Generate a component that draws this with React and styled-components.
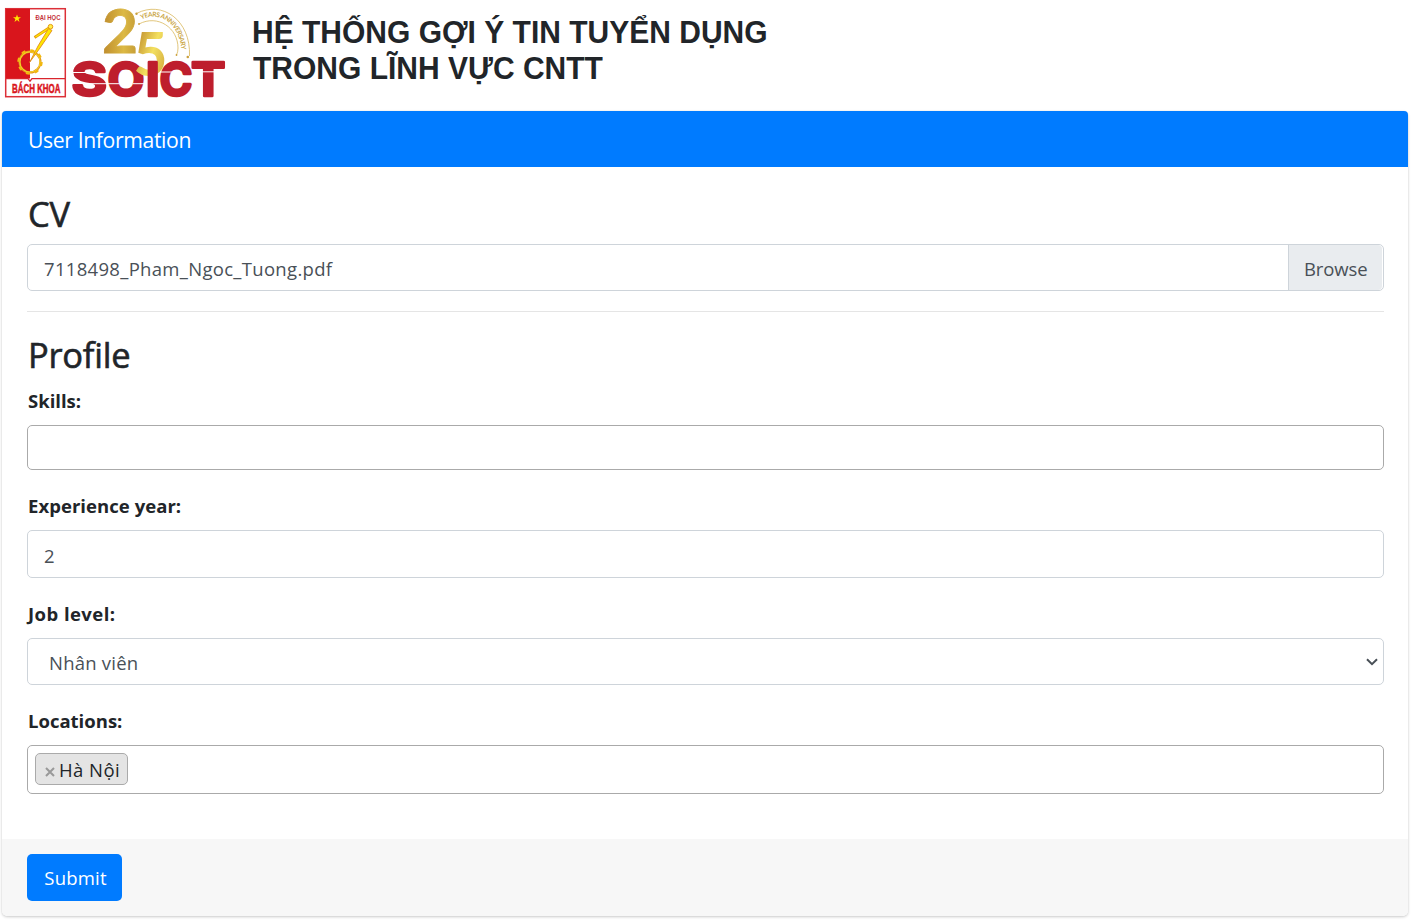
import React from 'react';
import styled, { createGlobalStyle } from 'styled-components';

const GlobalStyle = createGlobalStyle`
  *, *::before, *::after { box-sizing: border-box; }
  body {
    margin: 0;
    background: #fff;
    color: #212529;
    font-family: "Segoe UI", "Open Sans", "Noto Sans", sans-serif;
    font-size: 18.5px;
    line-height: 28px;
  }
`;

const Page = styled.div`
  width: 1412px;
  height: 922px;
  padding: 0 4px 0 2px;
  overflow: hidden;
`;

const Header = styled.header`
  display: flex;
  height: 111px;
`;

const Logo = styled.svg`
  display: block;
  flex: none;
  width: 250px;
  height: 108px;
`;

const SiteTitle = styled.h1`
  margin: 0;
  padding-top: 15px;
  font-family: "Liberation Sans", Arial, sans-serif;
  font-size: 30px;
  font-weight: 700;
  line-height: 36px;
  white-space: nowrap;
`;

const TitleLine = styled.span`
  display: block;
  padding-left: ${(p) => p.$indent || 0}px;
  transform: scaleY(1.05);
`;

const Card = styled.form`
  display: flex;
  flex-direction: column;
  height: 805px;
  border-radius: 5px;
  background: #fff;
  box-shadow: 0 0 1px rgba(0, 0, 0, 0.125), 0 1px 3px rgba(0, 0, 0, 0.2);
`;

const CardHeader = styled.div`
  display: flex;
  align-items: center;
  flex: none;
  height: 56px;
  padding: 2px 25px 0 26px;
  border-radius: 4px 4px 0 0;
  background: #007bff;
  color: #fff;
  font-size: 21.2px;
  letter-spacing: -0.38px;
`;

const CardBody = styled.div`
  flex: 1;
  padding: 25px 24px 0 25px;
`;

const CardFooter = styled.div`
  flex: none;
  height: 77px;
  padding: 15px 25px;
  border-radius: 0 0 5px 5px;
  background: #f7f7f7;
`;

const SectionTitle = styled.h2`
  height: 42px;
  margin: 0 0 ${(p) => p.$gap || 10}px;
  padding-left: 1px;
  font-size: 34.5px;
  font-weight: 500;
  line-height: 43px;
  letter-spacing: -0.25px;
  -webkit-text-stroke: 0.6px currentColor;
`;

const Divider = styled.hr`
  height: 1px;
  margin: 20px 0 21px;
  border: 0;
  background: #e5e5e5;
`;

const Field = styled.div`
  margin-bottom: 22px;
`;

const Label = styled.label`
  display: block;
  height: 28px;
  margin-bottom: 10px;
  padding-left: 1px;
  font-weight: 700;
  line-height: 28px;
  letter-spacing: ${(p) => p.$spacing || 0}px;
`;

const Control = styled.div`
  display: flex;
  align-items: center;
  height: ${(p) => p.$height || 47}px;
  border: 1px solid ${(p) => (p.$dark ? '#aaa' : '#ced4da')};
  border-radius: 5px;
  background: #fff;
  color: #495057;
  overflow: hidden;
`;

const Value = styled.span`
  flex: 1;
  padding: 3px 0 0 ${(p) => p.$indent || 16}px;
  letter-spacing: ${(p) => p.$spacing || 0}px;
`;

const Browse = styled.span`
  display: flex;
  align-items: center;
  width: 94px;
  height: 45px;
  padding: 3px 0 0 15px;
  margin-right: 1px;
  border-left: 1px solid #ced4da;
  border-radius: 0 4px 4px 0;
  background: #e9ecef;
  letter-spacing: -0.1px;
`;

const Chevron = styled.svg`
  width: 12px;
  height: 8px;
  margin-right: 5px;
`;

const Tag = styled.span`
  display: flex;
  align-items: center;
  width: 93px;
  height: 32px;
  margin: 0 0 1px 7px;
  padding: 2px 0 0 9px;
  border: 1px solid #aaa;
  border-radius: 5px;
  background: #e4e4e4;
  color: #212529;
  letter-spacing: 0.45px;
`;

const Remove = styled.svg`
  width: 10px;
  height: 10px;
  margin: 4px 4px 0 0;
`;

const SubmitButton = styled.button`
  display: block;
  width: 95px;
  height: 47px;
  padding: 0 0 0 2px;
  border: 0;
  border-radius: 5px;
  background: #007bff;
  color: #fff;
  font: inherit;
  letter-spacing: 0.2px;
`;

function Logos() {
  return (
    <Logo viewBox="2 0 250 108">
      <defs>
        <linearGradient id="gold" x1="0" y1="0" x2="1" y2="0">
          <stop offset="0" stopColor="#bd8a2c" />
          <stop offset="0.6" stopColor="#dcb944" />
          <stop offset="1" stopColor="#c39a35" />
        </linearGradient>
        <linearGradient id="goldBright" gradientUnits="userSpaceOnUse" x1="137" y1="50" x2="166" y2="60">
          <stop offset="0" stopColor="#cda23a" />
          <stop offset="0.5" stopColor="#f3e060" />
          <stop offset="1" stopColor="#d9b443" />
        </linearGradient>
        <path id="arc" d="M141.5 19.5 C163 9 182 28 181.5 55" />
      </defs>

      <rect x="5.7" y="8.7" width="59.6" height="88" fill="#fff" stroke="#dc3038" strokeWidth="1.5" />
      <path d="M6 9H30V78.6H6Z" fill="#d9151c" />
      <path d="M6 78.6H28l2 2.6 2-2.6H65" fill="none" stroke="#d9252d" strokeWidth="1.3" />
      <path d="M17 14.4l1 2.8h3l-2.4 1.8.9 2.9-2.5-1.8-2.5 1.8.9-2.9-2.4-1.8h3z" fill="#ffe600" />
      <text x="35.5" y="19.9" fontFamily="Liberation Sans, sans-serif" fontSize="7.4" fontWeight="700" fill="#c5343b" textLength="25" lengthAdjust="spacingAndGlyphs">ĐẠI HỌC</text>
      <text x="12" y="92.7" fontFamily="Liberation Sans, sans-serif" fontSize="12.2" fontWeight="700" fill="#d9151c" stroke="#d9151c" strokeWidth="0.5" textLength="48.5" lengthAdjust="spacingAndGlyphs">BÁCH KHOA</text>
      <g fill="none">
        <circle cx="30" cy="62" r="10.4" stroke="#e2951b" strokeWidth="2.2" />
        <circle cx="30" cy="62" r="10.2" stroke="#f7e02a" strokeWidth="0.9" />
        <circle cx="30" cy="62" r="11.6" strokeDasharray="4 5.11" stroke="#f2b90f" strokeWidth="2.2" />
        <path d="M49 28L34.5 37.5" stroke="#e59a12" strokeWidth="2.8" />
        <path d="M49 28L35.5 37" stroke="#ffe600" strokeWidth="1.4" />
      </g>
      <path d="M48.5 28.5L52 30.5 40 48 29.5 62.5 38 46Z" fill="#ffe600" stroke="#dc7d18" strokeWidth="0.8" />
      <circle cx="50.5" cy="26.7" r="2.3" fill="#fff04a" stroke="#e59a12" strokeWidth="1" />

      <g fill="none" stroke="#d9b85c" strokeWidth="0.8">
        <path d="M136.5 13.5C162 0 191 20 189.5 56" />
        <path d="M139 24C158 14 178 28 178 48Q178 52 176.5 55" />
      </g>
      <g fill="#caa03c">
        <circle cx="136.5" cy="13.7" r="1.2" />
        <circle cx="139" cy="24" r="0.9" />
        <circle cx="176.5" cy="55" r="0.9" />
        <circle cx="187.8" cy="57" r="1.3" />
      </g>
      <text fontFamily="Lato, sans-serif" fontSize="6.6" fontWeight="700" fill="#cba84b">
        <textPath href="#arc" textLength="60">YEARS ANNIVERSARY</textPath>
      </text>
      <text x="102" y="53" fontFamily="Lato, sans-serif" fontSize="62" fontWeight="700" fill="url(#gold)" stroke="url(#gold)" strokeWidth="0.8" textLength="36" lengthAdjust="spacingAndGlyphs">2</text>

      <g fontFamily="Inter, sans-serif" fontSize="46.5" fontWeight="700" fill="#be1e2d" stroke="#be1e2d" strokeWidth="2.6" strokeLinejoin="round">
        <text x="71.6" y="96" textLength="35.5" lengthAdjust="spacingAndGlyphs">S</text>
        <text x="107.5" y="96" textLength="37" lengthAdjust="spacingAndGlyphs">O</text>
      </g>
      <path d="M71 72.5H92M84 83.7H107M107 83.7H119.5M133 83.7H145" stroke="#fff" strokeWidth="1" />
      <text x="133.5" y="75.5" fontFamily="Lato, sans-serif" fontSize="61" fontWeight="700" fill="url(#goldBright)" textLength="34" lengthAdjust="spacingAndGlyphs">5</text>
      <g fontFamily="Inter, sans-serif" fontSize="46.5" fontWeight="700" fill="#be1e2d" stroke="#be1e2d" strokeWidth="2.6" strokeLinejoin="round">
        <text x="145.8" y="96" textLength="14" lengthAdjust="spacingAndGlyphs">I</text>
        <text x="159.5" y="96" textLength="33" lengthAdjust="spacingAndGlyphs">C</text>
        <text x="191" y="96" textLength="34.5" lengthAdjust="spacingAndGlyphs">T</text>
      </g>
      <path d="M160 72H173M202 71.8H215" stroke="#fff" strokeWidth="1" />
    </Logo>
  );
}

export default function App() {
  return (
    <>
      <GlobalStyle />
      <Page>
        <Header>
          <Logos />
          <SiteTitle>
            <TitleLine>HỆ THỐNG GỢI Ý TIN TUYỂN DỤNG</TitleLine>
            <TitleLine $indent={1}>TRONG LĨNH VỰC CNTT</TitleLine>
          </SiteTitle>
        </Header>
        <Card onSubmit={(e) => e.preventDefault()}>
          <CardHeader>User Information</CardHeader>
          <CardBody>
            <SectionTitle>CV</SectionTitle>
            <Control>
              <Value $spacing={0.31}>7118498_Pham_Ngoc_Tuong.pdf</Value>
              <Browse>Browse</Browse>
            </Control>
            <Divider />
            <SectionTitle $gap={12}>Profile</SectionTitle>
            <Field>
              <Label>Skills:</Label>
              <Control $dark $height={45} />
            </Field>
            <Field>
              <Label $spacing={0.05}>Experience year:</Label>
              <Control $height={48}>
                <Value>2</Value>
              </Control>
            </Field>
            <Field>
              <Label $spacing={0.45}>Job level:</Label>
              <Control>
                <Value $indent={21} $spacing={0.22}>Nhân viên</Value>
                <Chevron viewBox="0 0 12 8">
                  <path d="M1 1.2l5 5 5-5" fill="none" stroke="#495057" strokeWidth="2" />
                </Chevron>
              </Control>
            </Field>
            <Field>
              <Label>Locations:</Label>
              <Control $dark $height={49}>
                <Tag>
                  <Remove viewBox="0 0 10 10">
                    <path d="M1 1l8 8M9 1L1 9" stroke="#999" strokeWidth="2" />
                  </Remove>
                  Hà Nội
                </Tag>
              </Control>
            </Field>
          </CardBody>
          <CardFooter>
            <SubmitButton type="submit">Submit</SubmitButton>
          </CardFooter>
        </Card>
      </Page>
    </>
  );
}
